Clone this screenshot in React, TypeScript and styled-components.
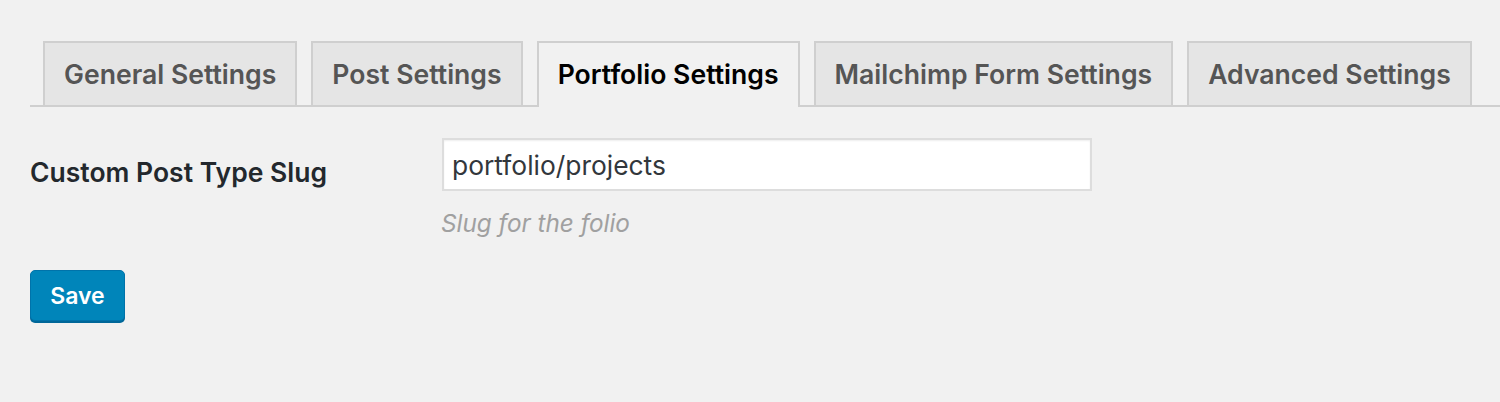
import React from 'react'
import styled, { createGlobalStyle } from 'styled-components'

const GlobalStyle = createGlobalStyle`
  html, body {
    margin: 0;
    padding: 0;
    background: #f1f1f1;
  }
  body {
    font-family: Inter, "Open Sans", "Liberation Sans", sans-serif;
    color: #23282d;
  }
`

const tabs = [
  'General Settings',
  'Post Settings',
  'Portfolio Settings',
  'Mailchimp Form Settings',
  'Advanced Settings',
]

const App: React.FC = () => {
  return (
    <>
      <GlobalStyle />
      <Page>
        <TabBar>
          {tabs.map((t) => (
            <Tab key={t} active={t === 'Portfolio Settings'}>
              {t}
            </Tab>
          ))}
        </TabBar>
        <Row>
          <Label>Custom Post Type Slug</Label>
          <Field>
            <Input defaultValue="portfolio/projects" />
            <Description>Slug for the folio</Description>
          </Field>
        </Row>
        <SaveButton>Save</SaveButton>
      </Page>
    </>
  )
}

export default App

const Page = styled.div`
  padding: 41px 0 0 30px;
  height: 402px;
  box-sizing: border-box;
`

const TabBar = styled.div`
  display: flex;
  gap: 14px;
  padding-left: 13px;
  border-bottom: 2px solid #cfcfcf;
  height: 64px;
`

const Tab = styled.div<{ active: boolean }>`
  display: flex;
  align-items: center;
  padding: 0 19px;
  box-sizing: border-box;
  border: 2px solid #cfcfcf;
  border-bottom: none;
  background: ${({ active }) => (active ? '#f1f1f1' : '#e5e5e5')};
  color: ${({ active }) => (active ? '#000' : '#555')};
  font-size: 26.6px;
  font-weight: 600;
  white-space: nowrap;
  height: ${({ active }) => (active ? '66px' : '64px')};
  padding-bottom: ${({ active }) => (active ? '2px' : '0')};
`

const Row = styled.div`
  display: flex;
  align-items: flex-start;
  margin-top: 31px;
`

const Label = styled.div`
  width: 412px;
  flex-shrink: 0;
  margin-top: 18px;
  font-size: 26.5px;
  font-weight: 600;
  color: #23282d;
`

const Field = styled.div`
  display: flex;
  flex-direction: column;
`

const Input = styled.input`
  width: 650px;
  height: 53px;
  box-sizing: border-box;
  border: 2px solid #ddd;
  background: #fff;
  padding: 0 8px;
  font-family: inherit;
  font-size: 26.4px;
  color: #32373c;
  outline: none;
  box-shadow: inset 0 1px 2px rgba(0, 0, 0, 0.07);
`

const Description = styled.p`
  margin: 17px 0 0 -1px;
  font-size: 24.3px;
  font-style: italic;
  color: #a0a0a0;
`

const SaveButton = styled.button`
  margin-top: 32px;
  width: 95px;
  height: 51px;
  border: 1px solid #0073aa;
  border-radius: 5px;
  background: #0085ba;
  box-shadow: 0 2px 0 #006799;
  color: #fff;
  font-family: inherit;
  font-size: 23px;
  font-weight: 600;
  cursor: pointer;
`
